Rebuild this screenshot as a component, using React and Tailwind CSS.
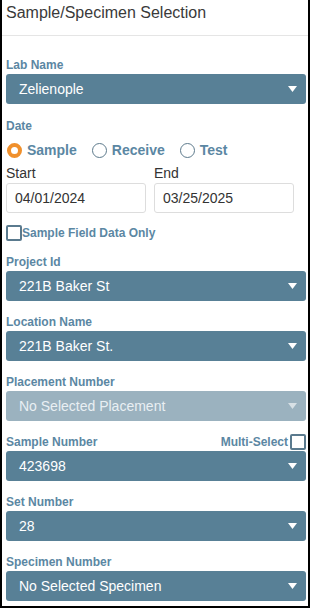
const LABEL = 'text-[12px] font-bold leading-[16px] text-[#5b87a3]'

function Caret({ dim }) {
  return (
    <svg width="9" height="6" viewBox="0 0 9 6" className={dim ? 'opacity-60' : ''}>
      <path d="M0 0 H9 L4.5 6 Z" fill="#fff" />
    </svg>
  )
}

function Select({ value, disabled }) {
  return (
    <div
      className={`flex h-[30px] w-[300px] items-center justify-between rounded-[3px] pl-[13px] pr-[9px] text-[14px] ${
        disabled ? 'bg-[#9bb2bf] text-[#e9eff3]' : 'bg-[#588096] text-white'
      }`}
    >
      <span>{value}</span>
      <Caret dim={disabled} />
    </div>
  )
}

function Field({ label, value, disabled, right }) {
  return (
    <div className="mt-[13px]">
      <div className="mb-[1px] flex h-[16px] items-center justify-between">
        <span className={LABEL}>{label}</span>
        {right}
      </div>
      <Select value={value} disabled={disabled} />
    </div>
  )
}

function Radio({ label, checked }) {
  return (
    <label className="flex items-center gap-[5px]">
      {checked ? (
        <span className="h-[15px] w-[15px] rounded-full border-[4px] border-[#f0902c] bg-white" />
      ) : (
        <span className="h-[15px] w-[15px] rounded-full border border-[#5d7a8c] bg-white" />
      )}
      <span className="text-[14px] font-bold text-[#5b87a3]">{label}</span>
    </label>
  )
}

function Box() {
  return <span className="block h-[16px] w-[16px] rounded-[2px] border-2 border-[#5a7a8e] bg-white" />
}

export default function App() {
  return (
    <div
      className="h-[608px] w-[310px] overflow-hidden border-x-2 border-b-2 border-black bg-white text-[#333]"
      style={{ fontFamily: '"Liberation Sans", Arial, sans-serif' }}
    >
      {/* Header */}
      <div className="h-[36px] border-b border-[#e5e5e5] pl-[4px] pt-[3px] text-[16px] leading-[20px] text-[#3a3a3a]">
        Sample/Specimen Selection
      </div>

      <div className="pl-[4px] pr-[2px] pt-[8px]">
        <Field label="Lab Name" value="Zelienople" />

        {/* Date */}
        <div className="mb-[4px] mt-[14px]">
          <div className={LABEL}>Date</div>
          <div className="mt-[8px] flex h-[16px] items-center gap-[15px] pl-[1px]">
            <Radio label="Sample" checked />
            <Radio label="Receive" />
            <Radio label="Test" />
          </div>
          <div className="mt-[6px] flex gap-[8px]">
            <div className="w-[140px]">
              <div className="text-[14px] leading-[18px] text-[#333]">Start</div>
              <div className="mt-[1px] flex h-[30px] items-center rounded-[3px] border border-[#ddd] pl-[8px] text-[14px] text-[#333]">
                04/01/2024
              </div>
            </div>
            <div className="w-[140px]">
              <div className="text-[14px] leading-[18px] text-[#333]">End</div>
              <div className="mt-[1px] flex h-[30px] items-center rounded-[3px] border border-[#ddd] pl-[8px] text-[14px] text-[#333]">
                03/25/2025
              </div>
            </div>
          </div>
          <div className="mt-[12px] flex items-center">
            <Box />
            <span className={LABEL}>Sample Field Data Only</span>
          </div>
        </div>

        <Field label="Project Id" value="221B Baker St" />
        <Field label="Location Name" value="221B Baker St." />
        <Field label="Placement Number" value="No Selected Placement" disabled />
        <Field
          label="Sample Number"
          value="423698"
          right={
            <span className="flex items-center gap-[2px]">
              <span className={LABEL}>Multi-Select</span>
              <Box />
            </span>
          }
        />
        <Field label="Set Number" value="28" />
        <Field label="Specimen Number" value="No Selected Specimen" />
      </div>
    </div>
  )
}
